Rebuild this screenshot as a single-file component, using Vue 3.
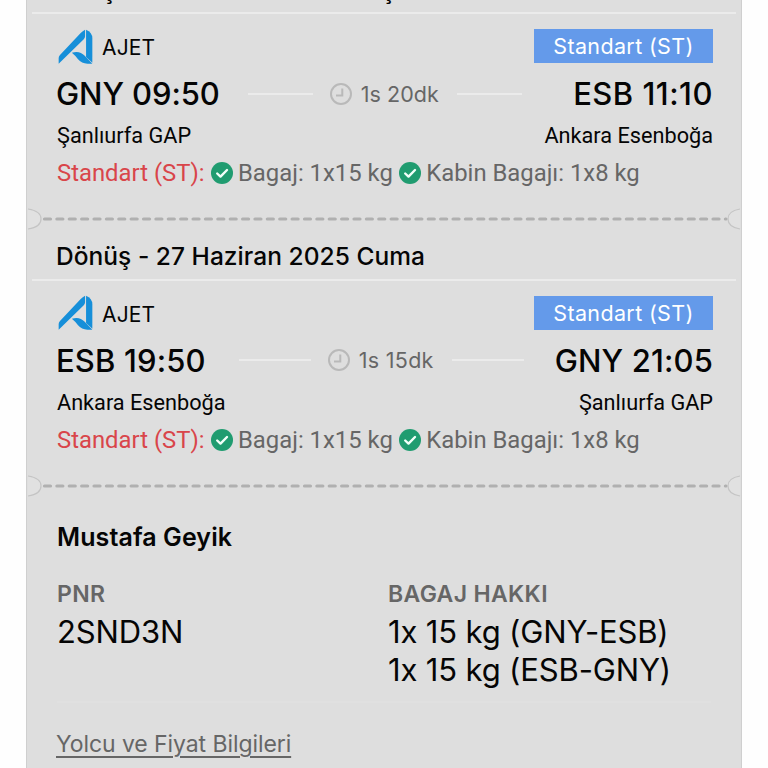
<template>
  <div class="page">
    <div class="ticket">
      <section v-for="f in flights" :key="f.title" class="flight" :class="f.kind">
        <div class="title">{{ f.title }}</div>
        <div class="content">
          <div class="row company">
            <div class="airline">
              <svg class="logo" viewBox="0 0 104 106">
                <path d="M1 105V88Q1 83 5 79L67 13Q74 5 81 2V22Q81 27 77 31Z" />
                <path d="M84 2Q103 10 103 28V102L84 85Z" />
                <path d="M41 72Q64 64 80 81L103 105H88Q71 105 59 91Q51 80 41 72Z" />
              </svg>
              <span>AJET</span>
            </div>
            <div class="badge">Standart (ST)</div>
          </div>
          <div class="row times">
            <div class="time">{{ f.from }}</div>
            <div class="duration">
              <i></i>
              <svg class="clock" viewBox="0 0 22 22">
                <circle cx="11" cy="11" r="10" />
                <path d="M12.3 5.5V12.5H6" />
              </svg>
              <span>{{ f.duration }}</span>
              <i class="after"></i>
            </div>
            <div class="time end">{{ f.to }}</div>
          </div>
          <div class="row places">
            <span>{{ f.fromPlace }}</span>
            <span>{{ f.toPlace }}</span>
          </div>
          <div class="row baggage">
            <span class="fare">Standart (ST):</span>
            <svg class="check" viewBox="0 0 22 22">
              <circle cx="11" cy="11" r="11" />
              <path d="M6.2 11.5L9.5 14.6L16 8" />
            </svg>
            <span>Bagaj: 1x15 kg</span>
            <svg class="check" viewBox="0 0 22 22">
              <circle cx="11" cy="11" r="11" />
              <path d="M6.2 11.5L9.5 14.6L16 8" />
            </svg>
            <span>Kabin Bagajı: 1x8 kg</span>
          </div>
        </div>
        <svg class="tear" viewBox="0 0 714 22">
          <path class="notch" d="M1 1Q14 3 14 11T1 21" />
          <path class="dash" d="M17.5 11H699" />
          <path class="notch" d="M713 1Q701 3 701 11T713 21" />
        </svg>
      </section>

      <section class="passenger">
        <div class="name">Mustafa Geyik</div>
        <div class="info">
          <div>
            <div class="label">PNR</div>
            <div class="value">2SND3N</div>
          </div>
          <div>
            <div class="label">BAGAJ HAKKI</div>
            <div class="value">1x 15 kg (GNY-ESB)</div>
            <div class="value">1x 15 kg (ESB-GNY)</div>
          </div>
        </div>
        <div class="line"></div>
        <a class="link">Yolcu ve Fiyat Bilgileri</a>
      </section>
    </div>
  </div>
</template>

<script setup>
const flights = [
  {
    kind: 'going',
    title: 'Gidiş - 26 Haziran 2025 Perşembe',
    from: 'GNY 09:50',
    to: 'ESB 11:10',
    duration: '1s 20dk',
    fromPlace: 'Şanlıurfa GAP',
    toPlace: 'Ankara Esenboğa'
  },
  {
    kind: 'return',
    title: 'Dönüş - 27 Haziran 2025 Cuma',
    from: 'ESB 19:50',
    to: 'GNY 21:05',
    duration: '1s 15dk',
    fromPlace: 'Ankara Esenboğa',
    toPlace: 'Şanlıurfa GAP'
  }
]
</script>

<style>
body { margin: 0; background: #fff; }
</style>

<style scoped>
.page { width: 768px; height: 768px; overflow: hidden; background: #fefefe; font-family: Inter, "Liberation Sans", sans-serif; color: #050505; }
.ticket { box-sizing: border-box; width: 716px; height: 830px; margin: -47px 0 0 26px; border: solid #cfcfcf; border-width: 0 1px; background: #dedede; white-space: nowrap; }
.flight { height: 266.5px; }
.title { box-sizing: border-box; height: 61px; margin: 0 5px; padding: 22px 0 0 24px; border-bottom: 2px solid #ebebeb; font-size: 24.5px; line-height: 28px; font-weight: 500; letter-spacing: 0.04px; }
.going .title { padding-top: 23px; }
.content { height: 195px; padding: 0 28px 0 30px; }
.row { display: flex; align-items: center; justify-content: space-between; }
.company { height: 64px; }
.airline { display: flex; align-items: center; font-size: 21px; letter-spacing: 0.15px; }
.airline span { margin-left: 9px; padding-top: 3px; }
.logo { width: 35px; height: 35px; margin-left: 1px; fill: #168fd9; }
.badge { width: 179px; height: 34px; background: #649aea; color: #fff; font-size: 21.5px; line-height: 34px; text-align: center; letter-spacing: 0.35px; }
.times { height: 31px; }
.time { flex: none; margin-left: -1px; font-size: 31px; font-weight: 500; letter-spacing: -0.1px; }
.going .end { letter-spacing: 0.5px; }
.return .time { letter-spacing: 0.15px; }
.duration { display: flex; align-items: center; margin: 0 auto 0 28px; color: #666; font-size: 21.5px; letter-spacing: 0.05px; }
.duration i { width: 65px; height: 2px; background: #ebebeb; }
.return .duration { margin-left: 33px; letter-spacing: 0.3px; }
.return .duration i { width: 72px; }
.clock { width: 22px; height: 22px; margin: 0 9px 0 17px; fill: none; stroke: #b9b9b9; stroke-width: 2; }
.duration .after { margin-left: 18px; }
.places { height: 53px; font: 21.7px Roboto, sans-serif; }
.baggage { justify-content: flex-start; height: 22px; color: #666; font: 23.85px Roboto, sans-serif; }
.fare { color: #d9454a; }
.check { flex: none; width: 22px; height: 22px; margin: 0 5px 0 6.5px; fill: #209c70; }
.check path { fill: none; stroke: #f2fff9; stroke-width: 2.4; stroke-linecap: round; stroke-linejoin: round; }
.tear { display: block; width: 714px; height: 22px; margin-top: -1px; }
.notch { fill: #e1e1e1; stroke: #c4c4c4; stroke-width: 1.2; }
.dash { fill: none; stroke: #b0b0b0; stroke-width: 3.2; stroke-linecap: round; stroke-dasharray: 6 6.38; }
.passenger { padding: 0 30px; }
.name { height: 62px; font-size: 25px; line-height: 28px; font-weight: 600; padding-top: 37px; box-sizing: border-box; letter-spacing: 0.1px; }
.info { display: grid; grid-template-columns: 331px 1fr; margin-top: 32px; }
.label { height: 32px; color: #666; font-size: 23px; line-height: 28px; font-weight: 600; letter-spacing: 0.35px; }
.value { height: 38px; font-size: 31px; line-height: 39px; letter-spacing: -0.15px; font-feature-settings: "calt" 0; }
.line { height: 2px; margin: 13px 0 27px; background: #e0e0e0; }
.link { margin-left: -1px; color: #666; font-size: 23px; line-height: 28px; letter-spacing: -0.08px; text-decoration: underline; text-decoration-thickness: 2px; text-underline-offset: 4px; }
</style>
